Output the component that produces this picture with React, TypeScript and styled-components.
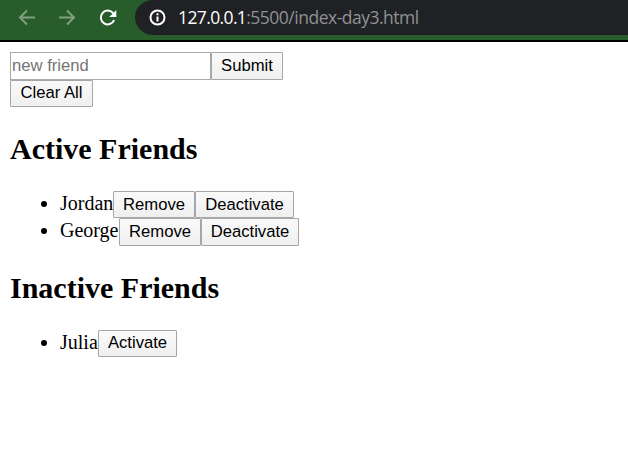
import React from "react";
import styled, { createGlobalStyle } from "styled-components";

const GlobalStyle = createGlobalStyle`
  * { box-sizing: border-box; }
  body {
    margin: 0;
    background: #fff;
    color: #000;
    font: 20px/23px "Liberation Serif", "Times New Roman", serif;
    overflow: hidden;
  }
`;

const Toolbar = styled.header`
  display: flex;
  align-items: flex-start;
  height: 42px;
  padding-left: 18px;
  background: #285d2b;
  border-bottom: 2px solid #000;
`;

const NavIcon = styled.svg<{ $dim?: boolean; $gap: number }>`
  flex: none;
  width: 18px;
  height: 18px;
  margin: 9px ${(p) => p.$gap}px 0 0;
  fill: none;
  stroke: ${(p) => (p.$dim ? "#80a181" : "#fff")};
  stroke-width: 2;
`;

const AddressBar = styled.div`
  display: flex;
  flex: 1;
  height: 35px;
  padding-left: 14px;
  background: #202124;
  border-radius: 18px 0 0 18px / 17px 0 0 18px;
  color: #fff;
  font: 17.5px/35px "Open Sans", sans-serif;
  white-space: nowrap;
`;

const Host = styled.span`
  letter-spacing: -0.62px;
`;

const Path = styled.span`
  color: #8f9295;
  letter-spacing: -0.5px;
`;

const Page = styled.main`
  padding: 10px;
`;

const Row = styled.div`
  display: flex;
`;

const FriendInput = styled.input`
  width: 201px;
  height: 28px;
  padding: 0 1px;
  border: 1px solid #a9a9a9;
  border-radius: 0;
  background: #fff;
  font: 16.67px "Liberation Sans", Arial, sans-serif;
  &::placeholder { color: #757575; opacity: 1; }
`;

const Button = styled.button<{ $width: number; $height?: number; $low?: boolean }>`
  flex: none;
  width: ${(p) => p.$width}px;
  height: ${(p) => p.$height ?? 27}px;
  padding: ${(p) => (p.$low ? "1px 0 0" : "0 0 1px")};
  border: 1px solid #a6a6a6;
  border-radius: 1px;
  background: linear-gradient(#f9f9f9 0%, #f6f6f6 40%, #efefef 100%);
  color: #000;
  font: 16.67px/24px "Liberation Sans", Arial, sans-serif;
  white-space: nowrap;
`;

const Heading = styled.h2`
  margin: 25px 0;
  font-size: 30px;
  line-height: 34px;
`;

const FriendList = styled.ul`
  margin: 0;
  padding: 0;
  list-style: none;
`;

const Friend = styled.li<{ $height: number }>`
  display: flex;
  height: ${(p) => p.$height}px;
  padding-left: 31px;
`;

const Bullet = styled.span`
  width: 6px;
  height: 6px;
  margin: 10px 13px 0 0;
  border-radius: 50%;
  background: #000;
`;

const Name = styled.span<{ $width: number }>`
  width: ${(p) => p.$width}px;
  line-height: 25px;
`;

export default function App() {
  return (
    <>
      <GlobalStyle />
      <Toolbar>
        <NavIcon $dim $gap={22} viewBox="0 0 18 18">
          <path d="M17 8.5H3M9 1.5l-7 7 7 7" />
        </NavIcon>
        <NavIcon $dim $gap={23} viewBox="0 0 18 18">
          <path d="M1 8.5h14M9 1.5l7 7-7 7" />
        </NavIcon>
        <NavIcon $gap={18} viewBox="0 0 18 18">
          <path d="M15.1 11.2a6.9 6.9 0 1 1-1.2-7.3L16 6" />
          <path d="M17.3 1v7.1h-7.1z" fill="#fff" stroke="none" />
        </NavIcon>
        <AddressBar>
          <NavIcon $gap={11} viewBox="0 0 18 18">
            <circle cx="8.5" cy="8.5" r="7" />
            <path d="M8.5 7.5v5M8.5 4.3v2" />
          </NavIcon>
          <Host>127.0.0.1</Host>
          <Path>:5500/index-day3.html</Path>
        </AddressBar>
      </Toolbar>
      <Page>
        <Row>
          <FriendInput placeholder="new friend" />
          <Button $width={72} $height={28}>Submit</Button>
        </Row>
        <Row>
          <Button $width={83}>Clear All</Button>
        </Row>
        <Heading>Active Friends</Heading>
        <FriendList>
          <Friend $height={27}>
            <Bullet />
            <Name $width={53}>Jordan</Name>
            <Button $width={82} $low>Remove</Button>
            <Button $width={99} $low>Deactivate</Button>
          </Friend>
          <Friend $height={28}>
            <Bullet />
            <Name $width={59}>George</Name>
            <Button $width={82} $height={28}>Remove</Button>
            <Button $width={98} $height={28}>Deactivate</Button>
          </Friend>
        </FriendList>
        <Heading>Inactive Friends</Heading>
        <FriendList>
          <Friend $height={27}>
            <Bullet />
            <Name $width={38}>Julia</Name>
            <Button $width={79}>Activate</Button>
          </Friend>
        </FriendList>
      </Page>
    </>
  );
}
